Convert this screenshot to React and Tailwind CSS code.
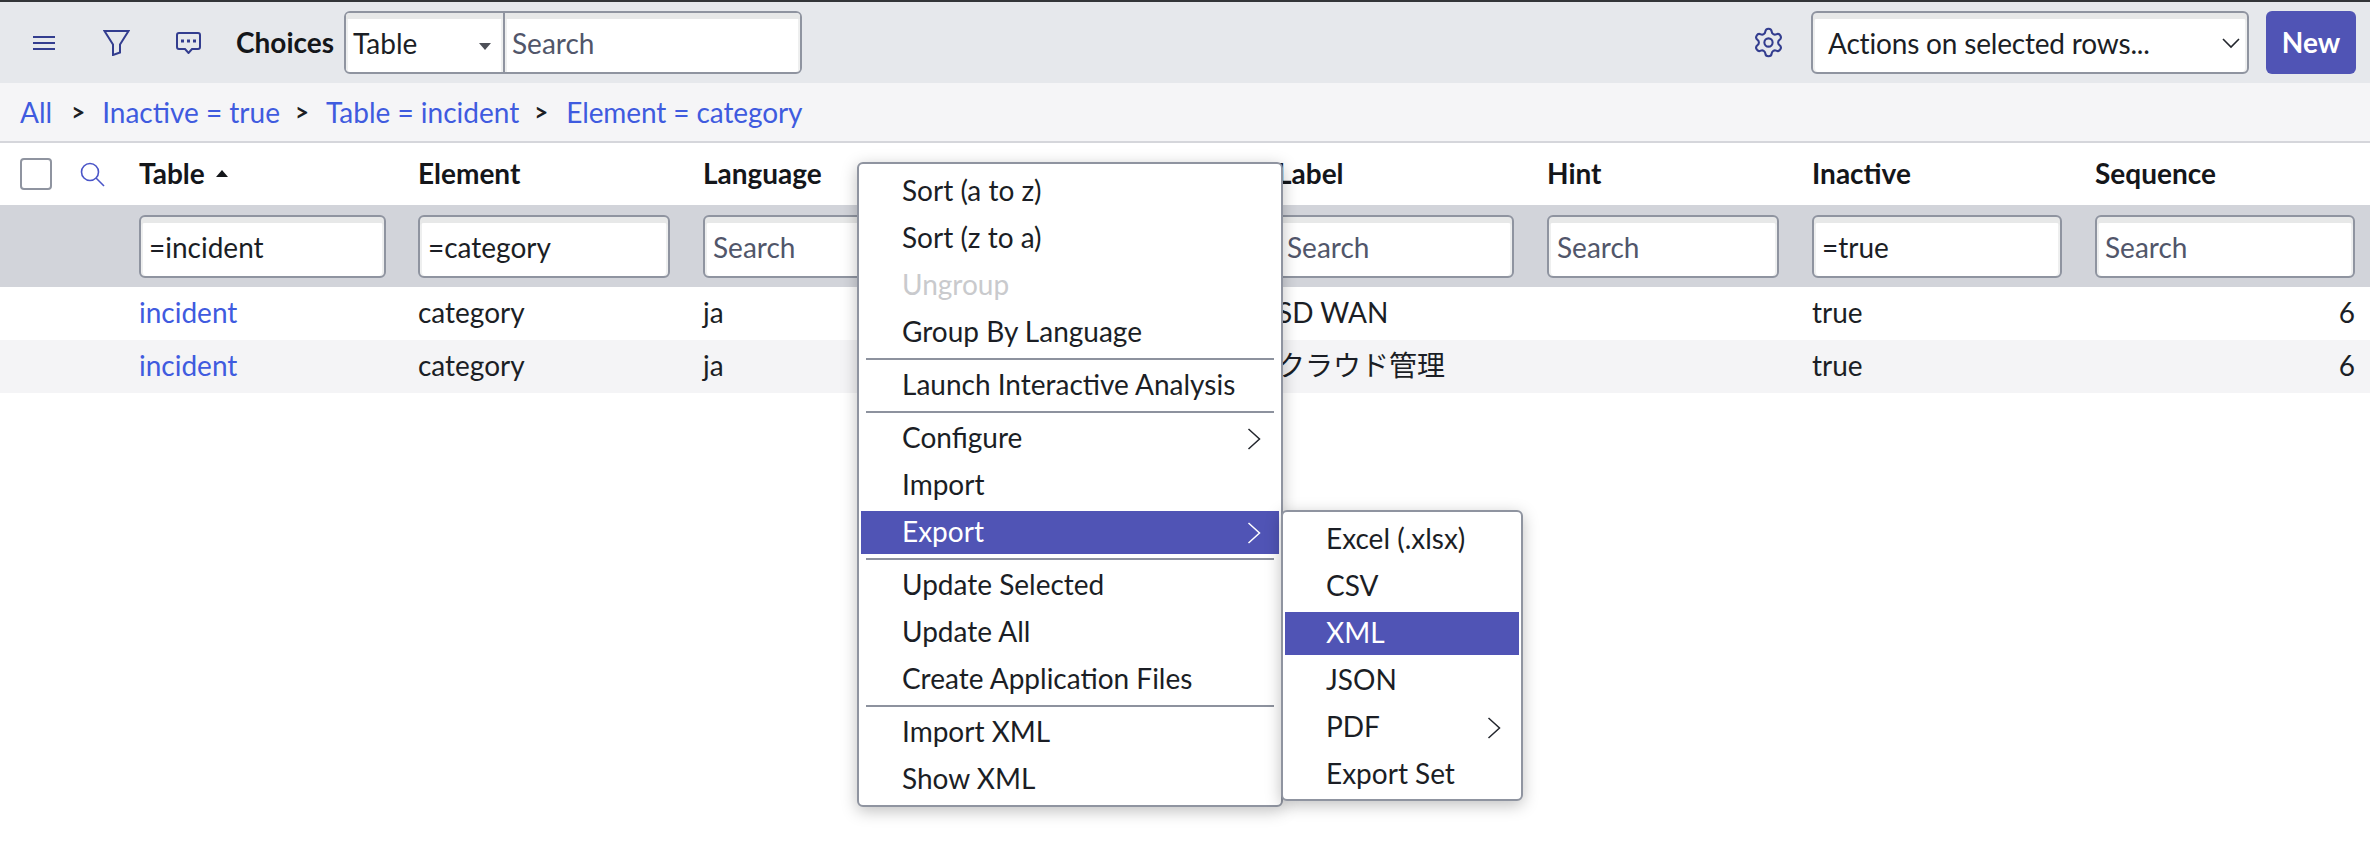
import React from 'react';
import { Settings } from 'lucide-react';

const FONT = "font-['Lato','Noto_Sans_CJK_JP',sans-serif]";
const LINK = 'text-[#3f5bdf]';
const INSET = 'shadow-[inset_0_6px_0_#e7e8e8,inset_2px_0_0_#eeefef,inset_-2px_0_0_#eeefef]';

// Right pointing chevron used in the context menus
const Chevron = ({ className = 'text-[#23262d]' }) => (
  <svg width="14" height="22" viewBox="0 0 14 22" fill="none" stroke="currentColor" strokeWidth="1.5" className={className}>
    <path d="M1.5 1l11 10-11 10" />
  </svg>
);

const MenuItem = ({ label, hasArrow, active, disabled }) => (
  <div className="h-[47px] py-[2px] mx-[2px]">
    <div className={`h-full flex items-center justify-between pl-[41px] pr-[18px] ${active ? 'bg-[#5054b5] text-white' : disabled ? 'text-[#c9cacd]' : 'text-[#1b1e25]'}`}>
      <span className="pb-[3px]">{label}</span>
      {hasArrow && <Chevron className={active ? 'text-white' : 'text-[#23262d]'} />}
    </div>
  </div>
);

const MenuDivider = () => <div className="h-[2px] my-[2px] mx-[7px] bg-[#8d929e]" />;

const FilterInput = ({ value, width }) => (
  <input
    readOnly
    value={value || ''}
    placeholder="Search"
    className={`${width} h-[63px] px-[8px] pt-[2px] bg-white border-2 border-[#8f94a0] rounded-[6px] text-[#1b1e25] placeholder:text-[#51566a] outline-none ${INSET}`}
  />
);

const rows = [
  { label: 'SD WAN', striped: false },
  { label: 'クラウド管理', striped: true },
];

const columns = 'grid grid-cols-[139px_279px_285px_574px_270px_265px_283px_275px]';

export default function App() {
  return (
    <div className={`relative h-[844px] w-[2370px] overflow-hidden bg-white text-[28px] leading-none text-[#1b1e25] ${FONT}`}>
      {/* Top toolbar */}
      <div className="h-[83px] border-t-2 border-[#333538] bg-[#e6e8ec] flex items-center pr-[14px]">
        <svg width="22" height="14" viewBox="0 0 22 14" stroke="#333d8f" strokeWidth="2" className="ml-[33px]">
          <path d="M0 1h22M0 7h22M0 13h22" />
        </svg>
        <svg width="27" height="26" viewBox="0 0 27 26" fill="none" stroke="#333d8f" strokeWidth="2" className="ml-[48px]">
          <path d="M1.500 1h24L17 14.500v8l-7 2.500V14.500z" />
        </svg>
        <svg width="25" height="22" viewBox="0 0 25 22" fill="none" stroke="#333d8f" strokeWidth="2" className="ml-[46px]">
          <path d="M3 1h19a2 2 0 0 1 2 2v12a2 2 0 0 1-2 2h-6l-3.500 4-3.500-4H3a2 2 0 0 1-2-2V3a2 2 0 0 1 2-2z" />
          <path d="M5 9h3M11 9h3M17 9h3" strokeWidth="3" />
        </svg>
        <span className="ml-[35px] pb-[2px] w-[108px] font-bold text-[#14161a]">Choices</span>
        <div className="w-[458px] h-[63px] flex border-2 border-[#8f94a0] rounded-[6px] bg-white overflow-hidden">
          <div className={`relative w-[159px] h-full flex items-center pl-[7px] border-r-2 border-[#8f94a0] ${INSET}`}>
            <span className="pt-[1px]">Table</span>
            <div className="absolute left-[133px] top-[30px] w-0 h-0 border-x-[6px] border-x-transparent border-t-[7px] border-t-[#4d5058]" />
          </div>
          <input readOnly placeholder="Search" className={`flex-1 min-w-0 px-[7px] pt-[1px] outline-none placeholder:text-[#51566a] ${INSET}`} />
        </div>
        <Settings size={33} strokeWidth={1.5} color="#333d8f" className="ml-auto" />
        <div className={`ml-[26px] relative w-[438px] h-[63px] flex items-center pl-[15px] bg-white border-2 border-[#8f94a0] rounded-[6px] ${INSET}`}>
          <span className="pt-[1px] tracking-[-0.18px]">Actions on selected rows...</span>
          <svg width="18" height="11" viewBox="0 0 18 11" fill="none" stroke="#23262d" strokeWidth="1.6" className="absolute right-[7px] top-[25px]">
            <path d="M1 1l8 8 8-8" />
          </svg>
        </div>
        <button className="ml-[17px] w-[90px] h-[63px] pb-[2px] rounded-[6px] bg-[#5054b5] text-white font-bold">New</button>
      </div>

      {/* Breadcrumbs */}
      <div className="h-[60px] border-b-2 border-[#d5d6db] bg-[#f5f5f7] flex items-center pl-[20px]">
        <span className={LINK}>All</span>
        <span className="ml-[19px] w-[12px] text-[24px] font-bold">&gt;</span>
        <span className={`ml-[19px] ${LINK}`}>Inactive = true</span>
        <span className="ml-[15px] w-[12px] text-[24px] font-bold">&gt;</span>
        <span className={`ml-[19px] ${LINK}`}>Table = incident</span>
        <span className="ml-[15px] w-[12px] text-[24px] font-bold">&gt;</span>
        <span className={`ml-[20px] tracking-[-0.1px] ${LINK}`}>Element = category</span>
      </div>

      {/* Column headers */}
      <div className={`${columns} h-[62px] items-center font-bold text-[#14161a]`}>
        <div className="flex items-center pl-[20px]">
          <div className="w-[32px] h-[32px] rounded-[4px] border-2 border-[#8f94a0] bg-white" />
          <svg width="25" height="25" viewBox="0 0 25 25" fill="none" stroke="#4a55c8" strokeWidth="1.600" className="ml-[28px]">
            <circle cx="10" cy="10" r="8.500" />
            <path d="M16 16l8 8" />
          </svg>
        </div>
        <div className="flex items-center pb-[2px]">
          <span>Table</span>
          <div className="ml-[11px] w-0 h-0 border-x-[6px] border-x-transparent border-b-[7px] border-b-[#14161a]" />
        </div>
        <div className="pb-[2px]">Element</div>
        <div className="pb-[2px]">Language</div>
        <div className="pb-[2px]">Label</div>
        <div className="pb-[2px]">Hint</div>
        <div className="pb-[2px]">Inactive</div>
        <div className="pb-[2px]">Sequence</div>
      </div>

      {/* Filter row */}
      <div className={`${columns} h-[82px] items-center bg-[#d2d4da]`}>
        <div />
        <div><FilterInput value="=incident" width="w-[247px]" /></div>
        <div><FilterInput value="=category" width="w-[252px]" /></div>
        <div><FilterInput width="w-[240px]" /></div>
        <div><FilterInput width="w-[237px]" /></div>
        <div><FilterInput width="w-[232px]" /></div>
        <div><FilterInput value="=true" width="w-[250px]" /></div>
        <div><FilterInput width="w-[260px]" /></div>
      </div>

      {/* Data rows */}
      {rows.map((row) => (
        <div key={row.label} className={`${columns} h-[53px] items-center pb-[3px] ${row.striped ? 'bg-[#f4f4f6]' : 'bg-white'}`}>
          <div />
          <div className={LINK}>incident</div>
          <div>category</div>
          <div>ja</div>
          <div>{row.label}</div>
          <div />
          <div>true</div>
          <div className="text-right pr-[15px]">6</div>
        </div>
      ))}

      {/* Context menu */}
      <div className="absolute left-[857px] top-[162px] w-[426px] pt-[4px] pb-[2px] bg-white border-2 border-[#8f94a0] rounded-[6px] shadow-[0_4px_16px_rgba(0,0,0,0.25)]">
        <MenuItem label="Sort (a to z)" />
        <MenuItem label="Sort (z to a)" />
        <MenuItem label="Ungroup" disabled />
        <MenuItem label="Group By Language" />
        <MenuDivider />
        <MenuItem label="Launch Interactive Analysis" />
        <MenuDivider />
        <MenuItem label="Configure" hasArrow />
        <MenuItem label="Import" />
        <MenuItem label="Export" hasArrow active />
        <MenuDivider />
        <MenuItem label="Update Selected" />
        <MenuItem label="Update All" />
        <MenuItem label="Create Application Files" />
        <MenuDivider />
        <MenuItem label="Import XML" />
        <MenuItem label="Show XML" />
      </div>

      {/* Export submenu */}
      <div className="absolute left-[1281px] top-[510px] w-[242px] pt-[4px] pb-[1px] bg-white border-2 border-[#8f94a0] rounded-[6px] shadow-[0_4px_16px_rgba(0,0,0,0.25)]">
        <MenuItem label="Excel (.xlsx)" />
        <MenuItem label="CSV" />
        <MenuItem label="XML" active />
        <MenuItem label="JSON" />
        <MenuItem label="PDF" hasArrow />
        <MenuItem label="Export Set" />
      </div>
    </div>
  );
}
